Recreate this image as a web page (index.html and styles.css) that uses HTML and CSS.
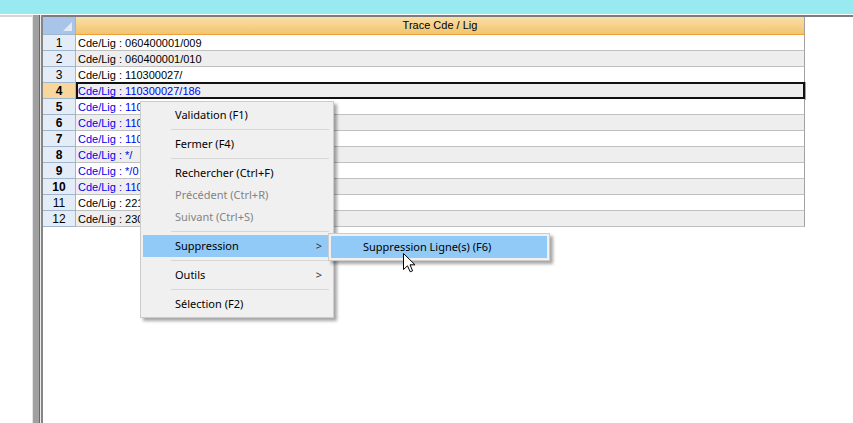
FILE: index.html
```html
<!DOCTYPE html>
<html lang="fr">
<head>
    <meta charset="UTF-8">
    <title>Trace Cde / Lig</title>
    <link rel="stylesheet" href="styles.css">
</head>
<body>
    <div class="titlebar"></div>
    <div class="workspace">
        <div class="side"></div>
        <div class="splitter">
            <span class="sp-a"></span><span class="sp-b"></span><span class="sp-c"></span><span class="sp-d"></span><span class="sp-e"></span>
        </div>
        <div class="panel">
            <div class="grid">
                <div class="corner"><span class="tri"></span></div>
                <div class="colhead">Trace Cde / Lig</div>

                <div class="rowhead">1</div><div class="cell">Cde/Lig : 060400001/009</div>
                <div class="rowhead">2</div><div class="cell alt">Cde/Lig : 060400001/010</div>
                <div class="rowhead">3</div><div class="cell">Cde/Lig : 110300027/</div>
                <div class="rowhead current">4</div><div class="cell alt blue focus"><span class="dotted">Cde/Lig : 110300027/186</span></div>
                <div class="rowhead bold">5</div><div class="cell blue">Cde/Lig : 110</div>
                <div class="rowhead bold">6</div><div class="cell alt blue">Cde/Lig : 110</div>
                <div class="rowhead bold">7</div><div class="cell blue">Cde/Lig : 110</div>
                <div class="rowhead bold">8</div><div class="cell alt blue">Cde/Lig : */</div>
                <div class="rowhead bold">9</div><div class="cell blue">Cde/Lig : */0</div>
                <div class="rowhead bold">10</div><div class="cell alt blue">Cde/Lig : 110</div>
                <div class="rowhead">11</div><div class="cell">Cde/Lig : 221</div>
                <div class="rowhead">12</div><div class="cell alt">Cde/Lig : 230</div>
            </div>
        </div>
    </div>

    <div class="menu">
        <div class="item"><span>Validation (F1)</span></div>
        <div class="sep"></div>
        <div class="item"><span>Fermer (F4)</span></div>
        <div class="sep"></div>
        <div class="item"><span>Rechercher (Ctrl+F)</span></div>
        <div class="item disabled"><span>Précédent (Ctrl+R)</span></div>
        <div class="item disabled"><span>Suivant (Ctrl+S)</span></div>
        <div class="sep"></div>
        <div class="item hover"><span>Suppression</span><span class="arrow">&gt;</span></div>
        <div class="sep"></div>
        <div class="item"><span>Outils</span><span class="arrow">&gt;</span></div>
        <div class="sep"></div>
        <div class="item"><span>Sélection (F2)</span></div>
    </div>

    <div class="menu submenu">
        <div class="item hover"><span>Suppression Ligne(s) (F6)</span></div>
    </div>

    <svg class="cursor" width="13" height="20" viewBox="0 0 13 20">
        <path d="M0.5 0.5 L0.5 16.5 L4.5 12.8 L7.2 18.8 L9.6 17.8 L7 11.8 L12 11.8 Z" fill="#fff" stroke="#000" stroke-width="1"/>
    </svg>
</body>
</html>
```

FILE: styles.css
```css
body{
    margin: 0;
    width: 853px;
    height: 423px;
    overflow: hidden;
    background-color: white;
    font-family: "Liberation Sans", Arial, sans-serif;
    font-size: 11px;
    color: black;
}
.titlebar{
    height: 14px;
    background-color: #98eaf0;
    border-bottom: 1px solid white;
}
.workspace{
    display: flex;
    height: 408px;
}
.side{
    width: 32px;
    border-top: 2px solid #d6d6d6;
    background-color: white;
}
.splitter{
    display: flex;
}
.splitter span{
    display: block;
    height: 100%;
}
.sp-a{ width: 1px; background-color: #e4e4e4; }
.sp-b{ width: 6px; background-color: #a0a0a0; }
.sp-c{ width: 1px; background-color: #696969; }
.sp-d{ width: 1px; background-color: #ececec; }
.sp-e{ width: 2px; background-color: #858585; }
.panel{
    flex: 1;
    border-top: 2px solid #7c7c7c;
    background-color: white;
}
.grid{
    display: grid;
    grid-template-columns: 33px 729px;
    grid-auto-rows: 16px;
    grid-template-rows: 18px;
}
.corner{
    position: relative;
    background-color: #a9c4e9;
    border-right: 1px solid #9eb6ce;
    border-bottom: 1px solid #9eb6ce;
    box-sizing: border-box;
}
.tri{
    position: absolute;
    right: 3px;
    bottom: 3px;
    width: 0;
    height: 0;
    border-left: 9px solid transparent;
    border-bottom: 9px solid #e2eaf6;
}
.colhead{
    background: linear-gradient(#fadfa8, #f2c46e);
    border-bottom: 1px solid #ee9f3a;
    border-right: 1px solid #a0a0a0;
    box-sizing: border-box;
    text-align: center;
    line-height: 17px;
}
.rowhead{
    background-color: #e4ecf7;
    border-right: 1px solid #9eb6ce;
    border-bottom: 1px solid #9eb6ce;
    box-sizing: border-box;
    text-align: center;
    line-height: 16px;
    font-size: 12px;
}
.rowhead.bold{
    font-weight: bold;
}
.rowhead.current{
    background-color: #f9d79c;
    font-weight: bold;
}
.cell{
    background-color: white;
    border-bottom: 1px solid #c0c0c0;
    border-right: 1px solid #a0a0a0;
    box-sizing: border-box;
    padding-left: 2px;
    line-height: 16px;
    white-space: nowrap;
    overflow: hidden;
}
.cell.alt{
    background-color: #eeeeee;
}
.cell.blue{
    color: #0000f0;
}
.cell.focus{
    box-shadow: inset 0 0 0 2px #111;
    margin-right: -1px;
    margin-top: -1px;
    height: 18px;
    padding-top: 1px;
}
.dotted{
    border-bottom: 1px dotted #0000f0;
}

.menu{
    position: absolute;
    left: 140px;
    top: 101px;
    width: 194px;
    box-sizing: border-box;
    padding: 2px;
    background-color: #f0f0f0;
    border: 1px solid #cccccc;
    box-shadow: 3px 3px 3px rgba(0, 0, 0, 0.35);
    font-family: "Noto Sans", "Open Sans", sans-serif;
    font-size: 11px;
    color: black;
}
.item{
    position: relative;
    height: 22px;
    line-height: 22px;
    padding-left: 32px;
    white-space: nowrap;
}
.item.disabled{
    color: #838383;
}
.item.hover{
    background-color: #91c9f7;
}
.arrow{
    position: absolute;
    right: 9px;
    top: 0;
    font-size: 11px;
    color: #333;
}
.sep{
    height: 7px;
    margin-left: 28px;
    margin-right: 2px;
    background: linear-gradient(transparent 3px, #d7d7d7 3px, #d7d7d7 4px, transparent 4px);
}
.submenu{
    left: 328px;
    top: 233px;
    width: 222px;
}
.cursor{
    position: absolute;
    left: 403px;
    top: 253px;
}
```
